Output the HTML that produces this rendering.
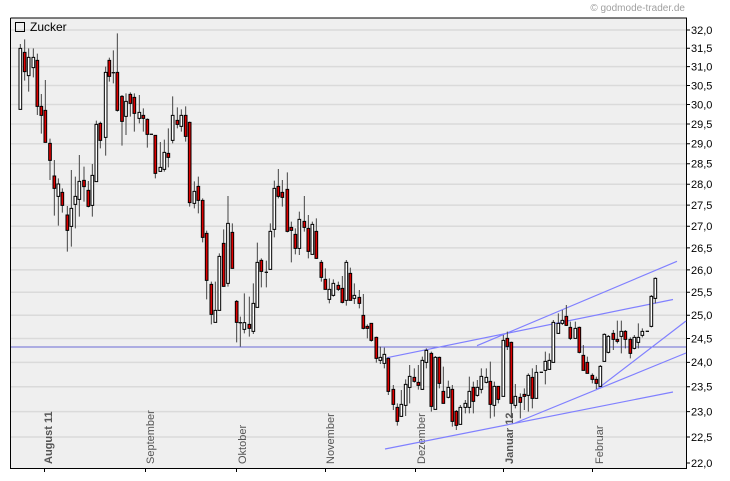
<!DOCTYPE html>
<html><head><meta charset="utf-8"><style>
html,body{margin:0;padding:0;background:#fff;width:730px;height:481px;overflow:hidden}
svg{display:block;font-family:"Liberation Sans",sans-serif}
.k{stroke:#444;stroke-width:3;fill:none}
.d{stroke:#111;stroke-width:4;fill:none}
.W{fill:#fff;stroke:#000;stroke-width:3}
.R{fill:#dd0000;stroke:#000;stroke-width:3}
</style></head><body>
<svg width="730" height="481" viewBox="0 0 730 481" xmlns="http://www.w3.org/2000/svg">
<text x="685" y="11" font-size="10" fill="#a0a0a0" text-anchor="end">© godmode-trader.de</text>
<rect x="10" y="18" width="676" height="450" fill="#efefef"/>
<g stroke="#dadada" stroke-width="1.5">
<path d="M11 30H686M11 48.2H686M11 66.6H686M11 85.5H686M11 104.5H686M11 124H686M11 143.7H686M11 163.8H686M11 184.3H686M11 205.1H686M11 226.3H686M11 247.9H686M11 269.9H686M11 292.3H686M11 315.2H686M11 338.5H686M11 362.4H686M11 386.7H686M11 411.6H686M11 437H686"/>
</g>
<g stroke="#000" stroke-width="1" fill="none">
<path d="M10.5 18V468.5H686.5V18H10.5"/>
<path d="M686 30h4M686 48.2h4M686 66.6h4M686 85.5h4M686 104.5h4M686 124h4M686 143.7h4M686 163.8h4M686 184.3h4M686 205.1h4M686 226.3h4M686 247.9h4M686 269.9h4M686 292.3h4M686 315.2h4M686 338.5h4M686 362.4h4M686 386.7h4M686 411.6h4M686 437h4M686 463h4"/>
<path d="M44.5 468v4M145.5 468v4M236.5 468v4M325.5 468v4M415.5 468v4M503.5 468v4M592.5 468v4"/>
</g>
<g font-size="11" fill="#000">
<text x="691" y="34">32,0</text><text x="691" y="52">31,5</text><text x="691" y="70.5">31,0</text><text x="691" y="89.5">30,5</text><text x="691" y="108.5">30,0</text><text x="691" y="128">29,5</text><text x="691" y="147.5">29,0</text><text x="691" y="167.5">28,5</text><text x="691" y="188">28,0</text><text x="691" y="209">27,5</text><text x="691" y="230">27,0</text><text x="691" y="252">26,5</text><text x="691" y="274">26,0</text><text x="691" y="296">25,5</text><text x="691" y="319">25,0</text><text x="691" y="342.5">24,5</text><text x="691" y="366">24,0</text><text x="691" y="390.5">23,5</text><text x="691" y="415.5">23,0</text><text x="691" y="441">22,5</text><text x="691" y="467">22,0</text>
</g>
<g font-size="11" fill="#555">
<text transform="translate(52,464) rotate(-90)" font-weight="bold">August 11</text>
<text transform="translate(154,464) rotate(-90)">September</text>
<text transform="translate(246,464) rotate(-90)">Oktober</text>
<text transform="translate(334,464) rotate(-90)">November</text>
<text transform="translate(425,464) rotate(-90)">Dezember</text>
<text transform="translate(513,464) rotate(-90)" font-weight="bold">Januar 12</text>
<text transform="translate(603,464) rotate(-90)">Februar</text>
</g>
<rect x="15.5" y="22.5" width="9" height="9" fill="none" stroke="#000"/>
<text x="30" y="31" font-size="12" fill="#000">Zucker</text>
<path d="M11 347H686" stroke="#6b6bd6" stroke-width="1"/>
<g stroke="#8080ff" stroke-width="1.2" fill="none">
<path d="M385 449L673 392M387 357.7L673 299.5M477 345.7L677 261.3M515 423L686 353M596 390L686 321"/>
</g>
<g transform="translate(10,20) scale(0.33333)">
<path class="k" d="M31 72V268M44 58V182M56 85V215M70 85V172M82 101V285M94 222V341M106 180V367M120 356V480M133 420V587M145 475V617M157 505V578M172 558V695M184 450V680M196 470V625M208 405V590M222 440V545M235 483V562M247 432V590M259 302V485M271 305V385M287 140V407M298 113V185M310 91V190M322 40V275M336 225V377M348 220V345M361 217V290M373 220V335M388 225V310M400 265V335M412 295V383M436 346V475M451 366V455M463 359V455M475 325V442M488 229V370M502 262V325M514 268V335M527 259V365M539 305V560M553 484V565M565 470V580M578 535V667M590 632V838M604 785V913M616 785V907M628 700V871M641 628V800M654 528V800M667 610V745M680 840V967"/>
<path class="d" d="M305 158h10M419 343h10"/>
<path class="W" d="M27 85h8V268h-8zM52 112h8V167h-8zM66 112h8V143h-8zM141 492h8V529h-8zM180 565h8V619h-8zM192 529h8V553h-8zM204 484h8V538h-8zM243 466h8V556h-8zM255 313h8V485h-8zM283 157h8V352h-8zM344 244h8V289h-8zM384 277h8V295h-8zM447 442h8V454h-8zM459 397h8V448h-8zM484 286h8V361h-8zM510 286h8V319h-8zM549 514h8V550h-8zM612 871h8V907h-8zM624 709h8V871h-8zM650 610h8V790h-8z"/>
<path class="R" d="M40 97h8V155h-8zM78 121h8V259h-8zM90 259h8V286h-8zM102 271h8V367h-8zM116 370h8V421h-8zM129 468h8V505h-8zM153 517h8V556h-8zM168 585h8V631h-8zM218 481h8V500h-8zM231 511h8V559h-8zM267 310h8V361h-8zM294 121h8V169h-8zM318 157h8V271h-8zM332 229h8V304h-8zM357 223h8V250h-8zM369 232h8V280h-8zM396 286h8V295h-8zM408 298h8V343h-8zM432 346h8V460h-8zM471 400h8V412h-8zM498 301h8V313h-8zM523 286h8V349h-8zM535 307h8V548h-8zM561 499h8V541h-8zM574 541h8V652h-8zM586 640h8V781h-8zM600 793h8V883h-8zM637 670h8V799h-8zM663 637h8V745h-8zM676 844h8V907h-8z"/>
</g>
<g transform="translate(230,160) scale(0.33333)">
<path class="k" d="M31 470V560M43 400V520M58 410V530M70 370V522M82 248V442M94 295V382M109 302V382M121 190V328M133 62V232M145 27V115M157 60V140M172 37V217M184 185V307M196 205V283M208 155V285M223 108V215M235 165V295M247 185V283M259 175V297M274 300V365M286 325V388M298 355V430M310 358V410M325 365V393M337 348V430M349 300V437M361 323V421M373 370V432M388 390V445M400 402V508M412 493V535M424 490V545M439 530V608M451 560V612M463 563V625M475 593V705M490 675V750M502 730V797M514 690V771M527 658V768M539 615V730M553 625V668M565 615V689M577 590V690M589 565V625M604 575V755M616 588V748M628 590V685M640 620V730M655 662V715"/>
<path class="d" d="M26 488h10M104 337h10"/>
<path class="W" d="M39 488h8V508h-8zM66 430h8V514h-8zM78 307h8V442h-8zM117 214h8V328h-8zM129 85h8V208h-8zM204 178h8V265h-8zM243 193h8V283h-8zM294 388h8V418h-8zM306 370h8V406h-8zM345 307h8V421h-8zM369 406h8V415h-8zM447 592h8V601h-8zM459 583h8V610h-8zM510 733h8V769h-8zM523 673h8V736h-8zM535 649h8V682h-8zM573 601h8V688h-8zM585 571h8V607h-8zM612 592h8V748h-8zM651 682h8V712h-8z"/>
<path class="R" d="M54 493h8V505h-8zM90 301h8V334h-8zM141 79h8V109h-8zM153 97h8V112h-8zM168 88h8V214h-8zM180 202h8V211h-8zM192 223h8V265h-8zM219 184h8V202h-8zM231 205h8V274h-8zM255 214h8V295h-8zM270 307h8V352h-8zM282 358h8V388h-8zM321 376h8V388h-8zM333 385h8V427h-8zM357 340h8V421h-8zM384 412h8V430h-8zM396 466h8V505h-8zM408 499h8V505h-8zM420 490h8V541h-8zM435 532h8V595h-8zM471 595h8V694h-8zM486 688h8V733h-8zM498 742h8V784h-8zM549 652h8V664h-8zM561 667h8V676h-8zM600 580h8V739h-8zM624 592h8V670h-8zM636 694h8V730h-8z"/>
</g>
<g transform="translate(450,250) scale(0.33333)">
<path class="k" d="M7 405V530M19 480V540M31 465V523M46 450V490M58 380V490M70 395V490M82 390V440M94 355V430M109 355V400M121 335V505M133 395V500M145 408V460M160 255V439M172 245V300M184 275V505M196 402V475M211 430V505M223 415V480M235 370V485M247 355V475M259 345V445M286 305V403M298 310V358M310 210V337M325 190V252M337 180V225M349 165V228M361 215V270M376 215V265M388 230V310M400 285V362M412 320V370M427 370V400M439 380V417M451 345V410M463 250V335M475 255V310M490 240V300M502 212V280M514 212V310M526 240V295M541 262V325M553 255V298M565 220V295M577 235V262M604 135V232M616 82V160"/>
<path class="d" d="M269 367h10M587 244h10"/>
<path class="W" d="M27 472h8V523h-8zM42 460h8V472h-8zM54 424h8V472h-8zM78 412h8V436h-8zM90 379h8V418h-8zM105 382h8V397h-8zM129 409h8V466h-8zM156 271h8V439h-8zM192 439h8V466h-8zM231 376h8V436h-8zM255 367h8V445h-8zM282 334h8V361h-8zM294 331h8V358h-8zM306 217h8V337h-8zM321 220h8V250h-8zM333 211h8V220h-8zM372 235h8V265h-8zM447 349h8V409h-8zM459 253h8V334h-8zM471 259h8V307h-8zM510 244h8V259h-8zM549 262h8V295h-8zM561 262h8V277h-8zM573 244h8V256h-8zM600 139h8V229h-8zM612 85h8V145h-8z"/>
<path class="R" d="M3 418h8V514h-8zM15 484h8V526h-8zM66 412h8V454h-8zM117 394h8V463h-8zM141 409h8V448h-8zM168 265h8V289h-8zM180 277h8V460h-8zM207 442h8V457h-8zM219 433h8V439h-8zM243 382h8V445h-8zM345 199h8V226h-8zM357 232h8V265h-8zM384 232h8V307h-8zM396 316h8V361h-8zM408 337h8V370h-8zM423 376h8V388h-8zM435 388h8V400h-8zM486 250h8V268h-8zM498 268h8V274h-8zM522 244h8V268h-8zM537 268h8V310h-8z"/>
</g>
</svg>
</body></html>
